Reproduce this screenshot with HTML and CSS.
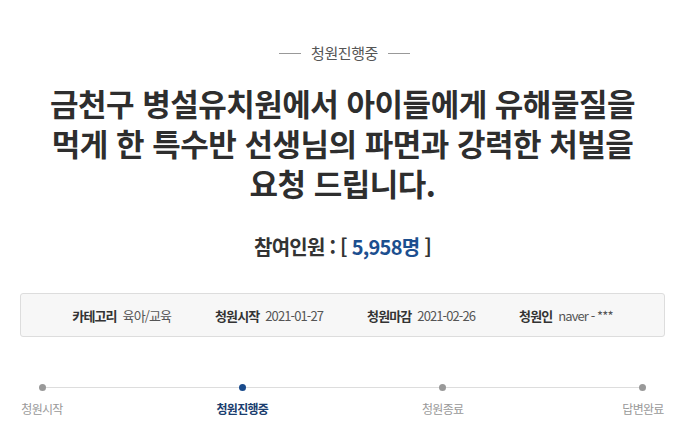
FILE: index.html
```html
<!DOCTYPE html>
<html lang="ko">
<head>
<meta charset="utf-8">
<link rel="stylesheet" href="styles.css">
</head>
<body>
<div class="page">
  <div class="status"><span class="status-line"></span><span class="status-text">청원진행중</span><span class="status-line"></span></div>
  <h1 class="title">금천구 병설유치원에서 아이들에게 유해물질을<br>먹게 한 특수반 선생님의 파면과 강력한 처벌을<br>요청 드립니다.</h1>
  <div class="count">참여인원 : [ <span class="count-num">5,958명</span> ]</div>
  <ul class="info">
    <li class="info-item"><strong class="info-label">카테고리</strong><span class="info-value">육아/교육</span></li>
    <li class="info-item"><strong class="info-label">청원시작</strong><span class="info-value">2021-01-27</span></li>
    <li class="info-item"><strong class="info-label">청원마감</strong><span class="info-value">2021-02-26</span></li>
    <li class="info-item"><strong class="info-label">청원인</strong><span class="info-value">naver - ***</span></li>
  </ul>
  <ol class="steps">
    <li class="step"><span class="dot"></span><span class="step-label">청원시작</span></li>
    <li class="step active"><span class="dot"></span><span class="step-label">청원진행중</span></li>
    <li class="step"><span class="dot"></span><span class="step-label">청원종료</span></li>
    <li class="step"><span class="dot"></span><span class="step-label">답변완료</span></li>
  </ol>
</div>
</body>
</html>
```
FILE: styles.css
```css
* { box-sizing: border-box; }
html, body { margin: 0; padding: 0; background: #fff; }
body {
  font-family: "Noto Sans CJK KR", "Noto Sans", sans-serif;
  color: #333;
  width: 680px;
  height: 434px;
  overflow: hidden;
}
.page { padding: 43px 15px 0 20px; }

.status {
  display: flex;
  justify-content: center;
  align-items: center;
  gap: 10px;
  height: 20px;
  margin-left: 4px;
}
.status-line { width: 22px; height: 1px; background: #999; }
.status-text { font-size: 15px; color: #555; letter-spacing: -0.4px; line-height: 20px; }

.title {
  margin: 20px 0 0;
  text-align: center;
  font-size: 31px;
  line-height: 40px;
  font-weight: 700;
  letter-spacing: -0.5px;
  color: #2e2e2e;
}

.count {
  margin-top: 32px;
  text-align: center;
  font-size: 20px;
  line-height: 24px;
  font-weight: 700;
  letter-spacing: -0.75px;
  color: #333;
}
.count-num { color: #1c4f8f; }

.info {
  list-style: none;
  margin: 34px 0 0;
  padding: 0;
  height: 44px;
  display: flex;
  justify-content: center;
  align-items: center;
  gap: 44px;
  background: #f7f7f7;
  border: 1px solid #ddd;
  border-radius: 3px;
}
.info-item { display: flex; align-items: center; gap: 6px; font-size: 13px; letter-spacing: -0.9px; }
.info-label { font-weight: 700; color: #333; }
.info-value { color: #555; }

.steps {
  list-style: none;
  margin: 47px 0 0;
  padding: 0;
  display: flex;
  justify-content: space-between;
  position: relative;
}
.steps::before {
  content: "";
  position: absolute;
  left: 22px;
  right: 22px;
  top: 3px;
  height: 1px;
  background: #ddd;
}
.step {
  width: 44px;
  display: flex;
  flex-direction: column;
  align-items: center;
  position: relative;
}
.dot { width: 7px; height: 7px; border-radius: 50%; background: #999; }
.step-label {
  margin-top: 10px;
  font-size: 12px;
  line-height: 16px;
  letter-spacing: -0.7px;
  color: #999;
  white-space: nowrap;
}
.step.active .dot { background: #1a4b8c; }
.step.active .step-label { color: #1a3d6e; font-weight: 700; }
```
